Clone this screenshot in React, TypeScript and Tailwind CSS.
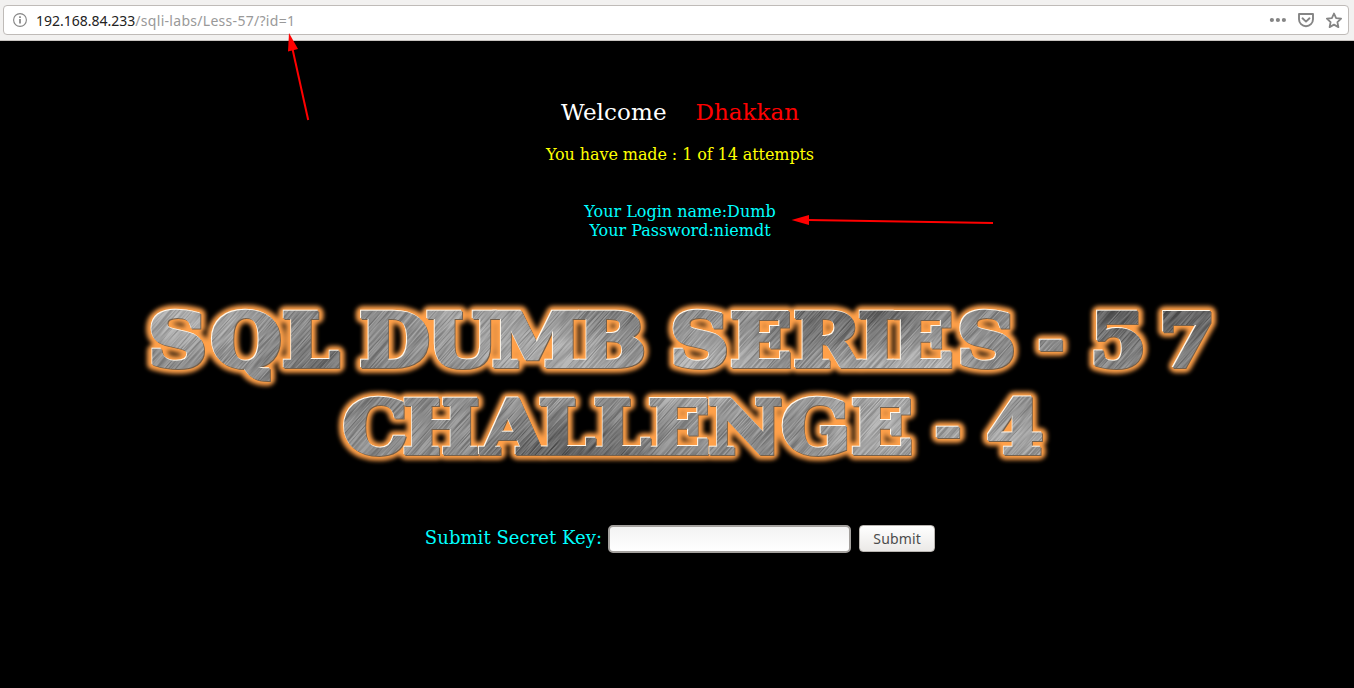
import React from "react";

const SX = 1.1;

type Word = { text: string; y: number; centers: number[]; size?: number };

const words: Word[] = [
  { text: "SQL", y: 366, centers: [177.5, 246, 310.5] },
  { text: "DUMB", y: 366, centers: [394.5, 462, 537, 611.5] },
  { text: "SERIES", y: 366, centers: [699.5, 761, 827, 877, 922.5, 986.5] },
  { text: "-", y: 360, centers: [1051], size: 54 },
  { text: "57", y: 366, centers: [1118, 1187] },
  { text: "CHALLENGE", y: 453, centers: [375, 441, 513, 567, 622, 679, 745, 816, 882] },
  { text: "-", y: 447, centers: [948], size: 54 },
  { text: "4", y: 453, centers: [1015] },
];

const sheen = [
  { x: 190, y: 312, r: 60, c: "#b8b8b8" },
  { x: 545, y: 355, r: 75, c: "#acacac" },
  { x: 700, y: 375, r: 65, c: "#b6b6b6" },
  { x: 900, y: 378, r: 80, c: "#bababa" },
  { x: 460, y: 320, r: 50, c: "#a8a8a8" },
  { x: 890, y: 430, r: 70, c: "#aaaaaa" },
  { x: 1010, y: 440, r: 60, c: "#a8a8a8" },
  { x: 330, y: 378, r: 55, c: "#686868" },
  { x: 860, y: 308, r: 80, c: "#646464" },
  { x: 1150, y: 300, r: 85, c: "#565656" },
  { x: 570, y: 462, r: 75, c: "#565656" },
  { x: 620, y: 305, r: 50, c: "#707070" },
];

function Banner() {
  return (
    <svg width="1080" height="180" viewBox="140 290 1080 180" className="block" role="img" aria-label="SQL DUMB SERIES - 57 CHALLENGE - 4">
      <defs>
        <g
          id="words"
          transform={`scale(${SX} 1)`}
          fontFamily="'DejaVu Serif', serif"
          fontWeight="700"
          fontSize="73.5"
          textAnchor="middle"
        >
          {words.map((w, i) => (
            <text key={i} y={w.y} x={w.centers.map((c) => (c / SX).toFixed(1)).join(" ")} fontSize={w.size}>
              {w.text}
            </text>
          ))}
        </g>
        <mask id="letters" maskUnits="userSpaceOnUse" x="130" y="280" width="1100" height="200">
          <use href="#words" fill="#fff" stroke="#fff" strokeWidth="4" />
        </mask>
        <filter id="soft" filterUnits="userSpaceOnUse" x="130" y="280" width="1100" height="200">
          <feGaussianBlur stdDeviation="2" />
        </filter>
        <filter id="blend" filterUnits="userSpaceOnUse" x="0" y="200" width="1354" height="400">
          <feGaussianBlur stdDeviation="18" />
        </filter>
        <filter id="brushed" filterUnits="userSpaceOnUse" x="-700" y="-700" width="1400" height="1400" colorInterpolationFilters="sRGB">
          <feTurbulence type="fractalNoise" baseFrequency="0.025 0.8" numOctaves="2" seed="4" />
          <feColorMatrix values="3 0 0 0 -0.95  3 0 0 0 -0.95  3 0 0 0 -0.95  0 0 0 0 0.18" />
        </filter>
      </defs>
      <g filter="url(#soft)">
        <use href="#words" fill="#ffa04a" stroke="#ffa04a" strokeWidth="13.5" strokeLinejoin="round" />
      </g>
      <use href="#words" x="0.9" y="0.9" fill="#75604b" stroke="#75604b" strokeWidth="4" />
      <use href="#words" x="-0.9" y="-0.9" fill="#fff8ec" stroke="#fff8ec" strokeWidth="4" />
      <g mask="url(#letters)">
        <rect x="130" y="280" width="1100" height="200" fill="#8c8c8c" />
        <g filter="url(#blend)">
          {sheen.map((s, i) => (
            <ellipse key={i} cx={s.x} cy={s.y} rx={s.r} ry={s.r * 0.55} fill={s.c} />
          ))}
        </g>
        <g transform="translate(680 380) rotate(-48)">
          <rect x="-700" y="-700" width="1400" height="1400" filter="url(#brushed)" />
        </g>
      </g>
    </svg>
  );
}

function Arrows() {
  return (
    <svg className="pointer-events-none absolute left-0 top-0" width="1354" height="688" aria-hidden="true">
      <g stroke="#f00" fill="#f00">
        <path d="M308.2 120 L292.5 49" strokeWidth="2" />
        <path d="M289 33 L298 49 L288 51.5 Z" stroke="none" />
        <path d="M993 223 L808 220" strokeWidth="2" />
        <path d="M791.5 220 L809 215 V225 Z" stroke="none" />
      </g>
    </svg>
  );
}

export default function App() {
  return (
    <div className="relative flex h-[688px] w-[1354px] flex-col overflow-hidden bg-black font-['DejaVu_Serif',serif]">
      <header className="h-[41px] shrink-0 border-b border-[#c8c4c0] bg-[#f2f1f0] px-[3px] pt-[5px]">
        <div className="flex h-[30px] w-[1346px] items-center rounded-[4px] border border-[#bfbbb8] bg-white pl-[9px] pr-[6px]">
          <svg width="14" height="14" viewBox="0 0 14 14" fill="none" stroke="#858585">
            <circle cx="7" cy="7" r="6.4" strokeWidth="1.1" />
            <path d="M7 6v4.4M7 3.2v1.7" strokeWidth="1.7" />
          </svg>
          <div className="ml-[9px] whitespace-pre pt-[2px] font-['Noto_Sans',sans-serif] text-[14px] leading-[28px] text-[#999]">
            <span className="text-[#222]">192.168.84.233</span>
            <span className="tracking-[0.29px]">/sqli-labs/Less-57/?id=1</span>
          </div>
          <div className="ml-auto flex items-center gap-[11px]">
            <svg width="17" height="16" viewBox="0 0 17 16" fill="#858585">
              <circle cx="2.9" cy="8" r="2.1" />
              <circle cx="8.9" cy="8" r="2.1" />
              <circle cx="14.9" cy="8" r="2.1" />
            </svg>
            <svg width="17" height="16" viewBox="0 0 17 16" fill="none" stroke="#858585" strokeWidth="1.9" strokeLinecap="round" strokeLinejoin="round">
              <path d="M2 2h14v5.2a7 7 0 0 1-14 0z" />
              <path d="M5.5 6.3l3.5 3.3 3.5-3.3" />
            </svg>
            <svg width="17" height="17" viewBox="0 0 17 17" fill="none" stroke="#858585" strokeWidth="1.8" strokeLinejoin="round">
              <path d="M9 1.5l2.1 4.6 5 .6-3.7 3.4 1 5-4.4-2.5-4.4 2.5 1-5L1.9 6.7l5-.6z" />
            </svg>
          </div>
        </div>
      </header>

      <main className="flex flex-col items-center pl-[6px]">
        <h1 className="mt-[57px] flex h-[28px] gap-[29px] text-[23px] leading-[28px] text-white">
          <span className="tracking-[0.1px]">Welcome</span>
          <span className="text-[#f00]">Dhakkan</span>
        </h1>
        <p className="mt-[19px] text-[16px] leading-[19px] tracking-[-0.09px] text-[#ff0]">You have made : 1 of 14 attempts</p>
        <p className="mt-[38px] text-center text-[16px] leading-[19px] text-[#0ff]">
          Your Login name:Dumb
          <br />
          Your Password:niemdt
        </p>
        <div className="mt-[50px]">
          <Banner />
        </div>
        <form className="mt-[55px] flex h-[28px] items-start text-[18px] text-[#0ff]" onSubmit={(e) => e.preventDefault()}>
          <label htmlFor="key" className="mt-[2px] leading-[22px] tracking-[0.05px]">Submit Secret Key:</label>
          <input
            id="key"
            className="ml-[6px] h-[28px] w-[243px] rounded-[5px] border-2 border-[#a3a09d] bg-gradient-to-b from-[#f3f3f3] to-white px-1 text-black outline-none"
          />
          <button className="ml-[8px] h-[27px] w-[76px] rounded-[4px] border border-[#b9b5b1] bg-gradient-to-b from-white to-[#ebe9e7] font-['Noto_Sans',sans-serif] text-[14px] leading-[26px] tracking-[0.15px] text-[#4c4c4c]">
            Submit
          </button>
        </form>
      </main>
      <Arrows />
    </div>
  );
}
